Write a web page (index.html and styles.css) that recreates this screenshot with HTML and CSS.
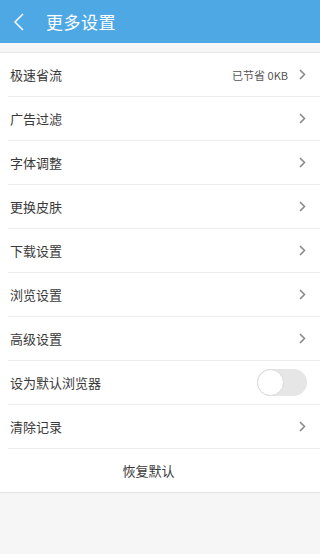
FILE: index.html
```html
<!DOCTYPE html>
<html lang="zh">
<head>
<meta charset="utf-8">
<link rel="stylesheet" href="styles.css">
</head>
<body>
<header class="bar">
  <svg class="back" width="12" height="20" viewBox="0 0 12 20"><path d="M10 2 L2 10 L10 18" fill="none" stroke="#fff" stroke-width="1.5"/></svg>
  <span class="title">更多设置</span>
</header>
<div class="gap"></div>
<ul class="list">
  <li class="row"><span>极速省流</span><span class="right"><span class="val">已节省 0KB</span><svg class="chev" width="7" height="11" viewBox="0 0 7 11"><path d="M1 1 L5.5 5.5 L1 10" fill="none" stroke="#8a8a8a" stroke-width="1.6"/></svg></span></li>
  <li class="row"><span>广告过滤</span><span class="right"><svg class="chev" width="7" height="11" viewBox="0 0 7 11"><path d="M1 1 L5.5 5.5 L1 10" fill="none" stroke="#8a8a8a" stroke-width="1.6"/></svg></span></li>
  <li class="row"><span>字体调整</span><span class="right"><svg class="chev" width="7" height="11" viewBox="0 0 7 11"><path d="M1 1 L5.5 5.5 L1 10" fill="none" stroke="#8a8a8a" stroke-width="1.6"/></svg></span></li>
  <li class="row"><span>更换皮肤</span><span class="right"><svg class="chev" width="7" height="11" viewBox="0 0 7 11"><path d="M1 1 L5.5 5.5 L1 10" fill="none" stroke="#8a8a8a" stroke-width="1.6"/></svg></span></li>
  <li class="row"><span>下载设置</span><span class="right"><svg class="chev" width="7" height="11" viewBox="0 0 7 11"><path d="M1 1 L5.5 5.5 L1 10" fill="none" stroke="#8a8a8a" stroke-width="1.6"/></svg></span></li>
  <li class="row"><span>浏览设置</span><span class="right"><svg class="chev" width="7" height="11" viewBox="0 0 7 11"><path d="M1 1 L5.5 5.5 L1 10" fill="none" stroke="#8a8a8a" stroke-width="1.6"/></svg></span></li>
  <li class="row"><span>高级设置</span><span class="right"><svg class="chev" width="7" height="11" viewBox="0 0 7 11"><path d="M1 1 L5.5 5.5 L1 10" fill="none" stroke="#8a8a8a" stroke-width="1.6"/></svg></span></li>
  <li class="row"><span>设为默认浏览器</span><span class="toggle"><span class="knob"></span></span></li>
  <li class="row"><span>清除记录</span><span class="right"><svg class="chev" width="7" height="11" viewBox="0 0 7 11"><path d="M1 1 L5.5 5.5 L1 10" fill="none" stroke="#8a8a8a" stroke-width="1.6"/></svg></span></li>
  <li class="row reset"><span>恢复默认</span></li>
</ul>
</body>
</html>
```
FILE: styles.css
```css
html, body {
  margin: 0;
  padding: 0;
}
body {
  width: 320px;
  height: 554px;
  background: #f6f6f6;
  font-family: "Noto Sans CJK SC", "Noto Sans", sans-serif;
  color: #333;
  overflow: hidden;
}
.bar {
  height: 43px;
  background: #4ea8e4;
  display: flex;
  align-items: center;
  box-sizing: border-box;
  padding-left: 13px;
}
.back {
  display: block;
}
.title {
  color: #fff;
  font-size: 17px;
  margin-left: 21px;
  letter-spacing: 0.5px;
}
.gap {
  height: 9px;
  background: #f6f6f6;
}
.list {
  list-style: none;
  margin: 0;
  padding: 0;
  background: #fff;
  border-top: 1px solid #e8e8e8;
  border-bottom: 1px solid #e2e2e2;
}
.row {
  height: 44px;
  box-sizing: border-box;
  margin-left: 8px;
  padding-left: 2px;
  padding-right: 14px;
  border-bottom: 1px solid #ececec;
  display: flex;
  align-items: center;
  justify-content: space-between;
  font-size: 13px;
  color: #3a3a3a;
}
.row.reset {
  border-bottom: none;
  justify-content: center;
  margin-left: 0;
  padding: 0 23px 0 0;
  height: 43px;
}
.right {
  display: flex;
  align-items: center;
}
.val {
  font-size: 11px;
  color: #555;
  margin-right: 11px;
}
.chev {
  display: block;
}
.toggle {
  width: 50px;
  height: 27px;
  border-radius: 14px;
  background: #e6e6e6;
  position: relative;
  margin-right: -1px;
}
.knob {
  position: absolute;
  left: 0;
  top: 0;
  width: 27px;
  height: 27px;
  box-sizing: border-box;
  border-radius: 50%;
  background: #fff;
  border: 1px solid #d8d8d8;
}
```
